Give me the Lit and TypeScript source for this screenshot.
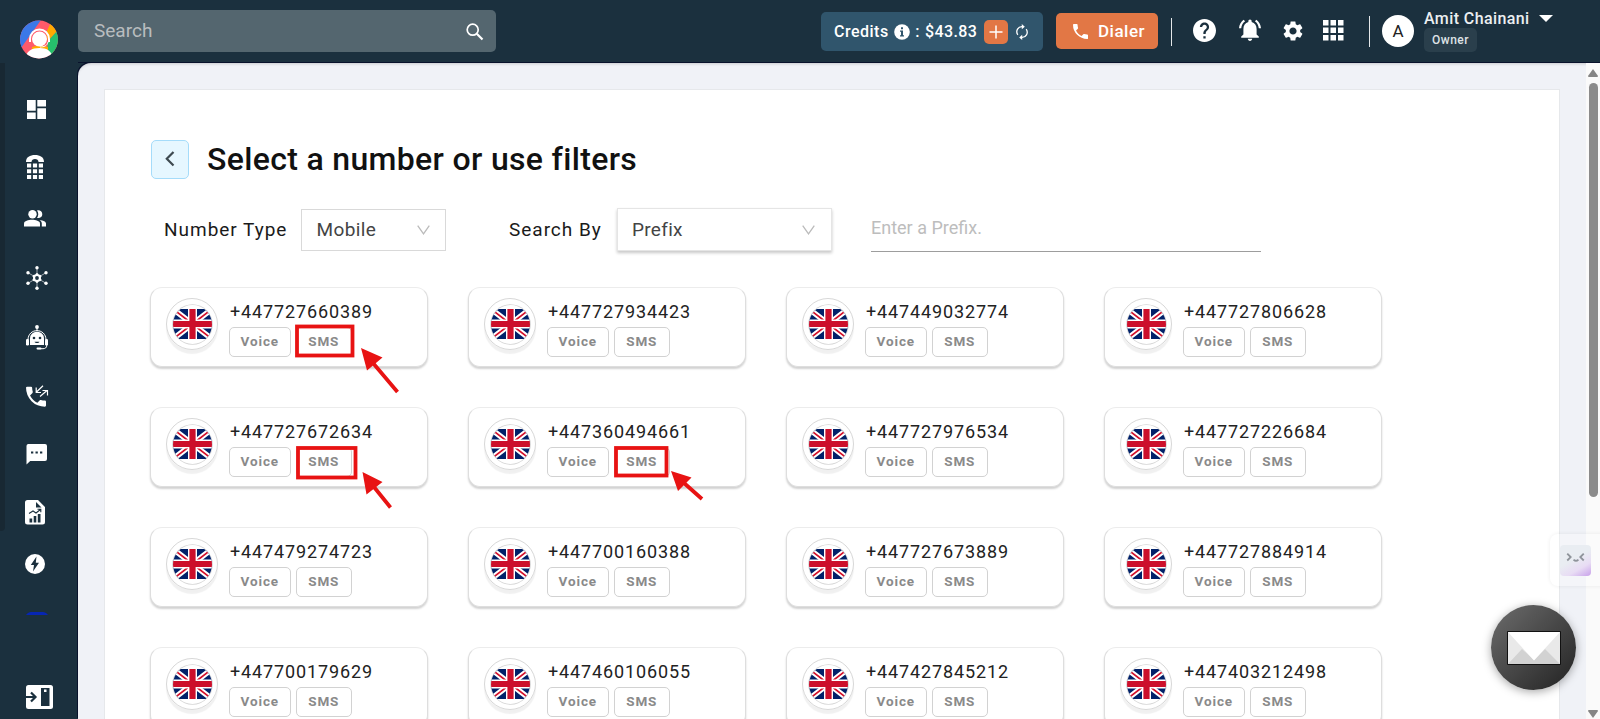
import { LitElement, html, css, svg } from "lit";
import { customElement, property } from "lit/decorators.js";

const flag = svg`
  <rect width="39" height="30" fill="#012169"/>
  <path d="M0 0L39 30M39 0L0 30" stroke="#fff" stroke-width="5.600"/>
  <path d="M0 0L19.5 15M39 30L19.5 15M39 0L19.5 15M0 30L19.5 15" stroke="#d3112b" stroke-width="1.700"/>
  <path d="M19.5 0V30M0 15H39" stroke="#fff" stroke-width="9"/>
  <path d="M19.5 0V30M0 15H39" stroke="#cc0f2b" stroke-width="6.200"/>`;

@customElement("number-card")
class NumberCard extends LitElement {
  @property() number = "";

  static styles = css`
    :host {
      display: flex;
      box-sizing: border-box;
      height: 80px;
      padding: 10px 0 0 15px;
      border: 1px solid #dedede;
      border-top-color: #ececec;
      border-radius: 12px;
      background: #fff;
      box-shadow: 0 2px 2px rgba(0, 0, 0, 0.18);
    }
    .ring {
      display: flex;
      align-items: center;
      justify-content: center;
      box-sizing: border-box;
      width: 52px;
      height: 52px;
      border: 1px solid #d8d8d8;
      border-radius: 50%;
      box-shadow: 0 4px 1px rgba(0, 0, 0, 0.06);
    }
    .flag {
      display: flex;
      align-items: center;
      justify-content: center;
      width: 39px;
      height: 39px;
      border-radius: 50%;
      overflow: hidden;
      box-shadow: 0 0 0 0.8px #d4d4d4;
    }
    .info {
      margin-left: 10.5px;
      padding-top: 3px;
    }
    .num {
      padding-left: 1.500px;
      font-size: 18px;
      line-height: 22px;
      letter-spacing: 0.88px;
      color: #222;
    }
    .tags {
      display: flex;
      gap: 5px;
      margin-top: 4px;
    }
    .tag {
      box-sizing: border-box;
      height: 30px;
      border: 1.5px solid #d2d2d2;
      border-radius: 5px;
      font-size: 13.500px;
      font-weight: 700;
      line-height: 26px;
      letter-spacing: 0.9px;
      text-align: center;
      color: #8a8a8a;
    }
    .voice { width: 62.500px; }
    .sms { width: 55.500px; }
  `;

  render() {
    return html`
      <div class="ring">
        <div class="flag"><svg width="39" height="30" viewBox="0 0 39 30">${flag}</svg></div>
      </div>
      <div class="info">
        <div class="num">${this.number}</div>
        <div class="tags">
          <span class="tag voice">Voice</span>
          <span class="tag sms">SMS</span>
        </div>
      </div>`;
  }
}

@customElement("side-nav")
class SideNav extends LitElement {
  static styles = css`
    :host {
      display: flex;
      flex-direction: column;
      box-sizing: border-box;
      width: 78px;
      height: 719px;
      background: #1b303e;
      color: #fff;
    }
    .logo { margin: 20px 0 0 20px; width: 38px; height: 39px; }
    .body { display: flex; margin-top: 4px; }
    .strip { width: 5px; height: 468px; background: #182833; border-bottom-right-radius: 4px; }
    .items { display: flex; flex-direction: column; }
    svg { display: block; fill: currentColor; }
    .dash { margin: 37px 0 0 22px; }
    .dial { margin: 36px 0 0 21px; }
    .people { margin: 31px 0 0 18px; }
    .hub { margin: 39px 0 0 20px; }
    .bot { margin: 35px 0 0 20px; }
    .call { margin: 34px 0 0 20px; }
    .chat { margin: 37px 0 0 21px; }
    .report { margin: 35px 0 0 20px; }
    .bolt { margin: 29px 0 0 20px; }
    .arc { margin: 38px 0 0 21px; }
    .collapse { margin: 70px 0 0 21px; }
  `;

  render() {
    return html`
      <svg class="logo" viewBox="0 0 38 39">
        <defs><clipPath id="c"><circle cx="19" cy="19.5" r="19"/></clipPath></defs>
        <g clip-path="url(#c)">
          <rect width="38" height="39" fill="#ff5a6a"/>
          <path d="M0 0H21L1 28H0Z" fill="#3b78e7"/>
          <path d="M32 0L26 13L28 21L38 10V0Z" fill="#ffaa00"/>
          <path d="M38 10L28 21L27 30L33 39H38Z" fill="#26bf6c"/>
          <path d="M12 27L20 25L28 27V32H12Z" fill="#ffaa00"/>
          <path d="M5 39C6 31 12 28 19.5 28S32 31 33 39Z" fill="#fff"/>
          <path d="M10 22V19A9.5 9.5 0 0 1 29 19V22" fill="none" stroke="#fff" stroke-width="2"/>
          <path d="M28 22C27 26 24 27 20 27" fill="none" stroke="#fff" stroke-width="1"/>
          <circle cx="19.5" cy="19" r="7.5" fill="#fff"/>
        </g>
      </svg>
      <div class="body">
        <div class="strip"></div>
        <div class="items">
          <svg class="dash" width="19" height="19" viewBox="0 0 19 19"><path d="M0 0H8.700V10.700H0ZM10.300 0H19V6.500H10.300ZM0 12.500H8.700V19H0ZM10.300 8.200H19V19H10.300Z"/></svg>
          <svg class="dial" width="18" height="24" viewBox="0 0 18 24">
            <path d="M0 7C0 2 4 0 9 0S18 2 18 7H12.5C12.5 5 11 4 9 4S5.500 5 5.500 7Z"/>
            <path d="M1 8.500H5.200V12.600H1ZM6.900 8.500H11.100V12.600H6.900ZM12.800 8.500H17V12.600H12.800ZM1 14.200H5.200V18.300H1ZM6.900 14.200H11.100V18.300H6.900ZM12.800 14.200H17V18.300H12.800ZM1 19.900H5.200V24H1ZM6.900 19.900H11.100V24H6.900ZM12.800 19.900H17V24H12.800Z"/>
          </svg>
          <svg class="people" width="24" height="17" viewBox="0 0 24 17">
            <circle cx="9.500" cy="4.200" r="4.200"/>
            <path d="M1 16.500V13.500C1 11 5.500 9.800 9 9.800S17 11 17 13.500V16.500Z"/>
            <path d="M14 7.800C15.700 5.700 15.700 2.700 14 .4C16.500 -.5 19.300 1.200 19.300 4.200S16.500 8.600 14 7.800ZM18.800 16.500V13.500C18.800 12 18 10.800 16.600 9.900C20 10.200 23 11.400 23 13.500V16.500Z"/>
          </svg>
          <svg class="hub" width="24" height="24" viewBox="0 0 24 24">
            <path d="M12 1V23M3 6.700L21 17.300M21 6.700L3 17.300" stroke="currentColor" stroke-width=".6"/>
            <circle cx="12" cy="12" r="4"/>
            <path d="M12 7.300V16.700M7.900 9.700L16.100 14.300M16.100 9.700L7.900 14.300" stroke="currentColor" stroke-width="2.200"/>
            <circle cx="12" cy="12" r="1.900" fill="#1b303e"/>
            <circle cx="12" cy="1.800" r="1.700"/><circle cx="12" cy="22.200" r="1.700"/><circle cx="3" cy="6.800" r="1.700"/><circle cx="21" cy="6.800" r="1.700"/><circle cx="3" cy="17.200" r="1.700"/><circle cx="21" cy="17.200" r="1.700"/>
          </svg>
          <svg class="bot" width="24" height="25" viewBox="0 0 24 25">
            <circle cx="12" cy="2" r="1.900"/><path d="M11.500 3H12.500V6H11.500Z"/>
            <path d="M3 15C3 2.500 21 2.500 21 15" fill="none" stroke="currentColor" stroke-width="1"/>
            <path d="M5 20V13.500C5 4.500 19 4.500 19 13.500V20Z"/>
            <rect x="1" y="14" width="3" height="6.500" rx="1.300"/><rect x="20" y="14" width="3" height="6.500" rx="1.300"/>
            <path d="M21.800 20C21.800 23 20 23.700 18 23.700H12.500" fill="none" stroke="currentColor" stroke-width="1"/>
            <rect x="11.500" y="22.600" width="5" height="2" rx="1"/>
            <circle cx="9" cy="13" r="1.300" fill="#1b303e"/><circle cx="15" cy="13" r="1.300" fill="#1b303e"/>
            <path d="M9.500 16.700H14.500C14 18.500 10 18.500 9.500 16.700Z" fill="#1b303e"/>
          </svg>
          <svg class="call" width="24" height="23" viewBox="0 0 24 23">
            <path transform="translate(-2.300 -.6) scale(1.110)" d="M6.620 10.790C8.060 13.620 10.380 15.940 13.210 17.380L15.410 15.180C15.690 14.900 16.080 14.820 16.430 14.930C17.550 15.300 18.750 15.500 20 15.500A1 1 0 0 1 21 16.500V20A1 1 0 0 1 20 21A17 17 0 0 1 3 4A1 1 0 0 1 4 3H7.500A1 1 0 0 1 8.500 4C8.500 5.250 8.700 6.450 9.070 7.570C9.180 7.920 9.100 8.310 8.820 8.590Z"/>
            <path d="M18 1.800L11.500 8M11.200 3.500V8.500H16M15 12.500L22 6.500M17.500 6.500H22.500V11.500" fill="none" stroke="currentColor" stroke-width="1.200"/>
          </svg>
          <svg class="chat" width="21" height="21" viewBox="0 0 21 21">
            <path d="M2 0H19A2 2 0 0 1 21 2V15A2 2 0 0 1 19 17H4.200L.5 20.500V2A2 2 0 0 1 2 0Z"/>
            <path d="M5 7.500H7.300V9.500H5ZM9.500 7.500H11.800V9.500H9.500ZM14 7.500H16.300V9.500H14Z" fill="#1b303e"/>
          </svg>
          <svg class="report" width="20" height="25" viewBox="0 0 20 25">
            <path d="M2.500 0H13L20 7V22A2.500 2.500 0 0 1 17.500 24.500H2.500A2.500 2.500 0 0 1 0 22V2.500A2.500 2.500 0 0 1 2.500 0Z"/>
            <path d="M11 2L16.500 7.500H11Z" fill="#1b303e"/>
            <path d="M4 13.500L8 11L11 13L15.500 9.500M12.500 9.300H15.800V12.300" fill="none" stroke="#1b303e" stroke-width="1.100"/>
            <path d="M4.500 18.500H7.200V22.500H4.500ZM8.700 16H11.300V22.500H8.700ZM12.800 14H15.500V22.500H12.800Z" fill="#1b303e"/>
          </svg>
          <svg class="bolt" width="20" height="20" viewBox="0 0 20 20"><circle cx="10" cy="10" r="10"/><path d="M11.500 2.500L5.800 11H9L8 17.500L14 8.700H10.800Z" fill="#1b303e"/></svg>
          <svg class="arc" width="22" height="3" viewBox="0 0 22 3"><path d="M0 3C2 .7 3 0 5 0H17C19 0 20 .7 22 3Z" fill="#0726b3"/></svg>
          <svg class="collapse" width="27" height="24" viewBox="0 0 27 24">
            <rect width="27" height="24" rx="2.500"/>
            <path d="M15 3H23.500V21H15Z" fill="#1b303e"/><rect x="18" y="4.500" width="2.500" height="2.500"/>
            <path d="M0 12H9M5 7.500L9.500 12L5 16.500" fill="none" stroke="#1b303e" stroke-width="2.200"/>
          </svg>
        </div>
      </div>`;
  }
}

@customElement("top-bar")
class TopBar extends LitElement {
  static styles = css`
    :host {
      display: flex;
      box-sizing: border-box;
      height: 63px;
      background: #1b303e;
      border-bottom: 1px solid #09122c;
      color: #fff;
    }
    svg { display: block; flex: none; fill: currentColor; }
    .search {
      display: flex;
      box-sizing: border-box;
      justify-content: space-between;
      width: 418px;
      height: 42px;
      margin: 10px 325px 0 0;
      padding: 0 12px 0 16px;
      border-radius: 5px;
      background: #54666f;
      color: #b9bdbf;
      font-size: 19px;
      line-height: 41px;
      letter-spacing: 0;
    }
    .search svg { margin-top: 13px; color: #fff; }
    .credits {
      display: flex;
      align-items: center;
      box-sizing: border-box;
      width: 222px;
      height: 39px;
      margin-top: 12px;
      padding: 0 13px;
      border-radius: 5px;
      background: #30556c;
      font-size: 16px;
      font-weight: 500;
      letter-spacing: 0.5px;
      white-space: nowrap;
    }
    .info { margin: 0 5.500px 0 5px; }
    .amount { margin-left: 5px; letter-spacing: 0.4px; }
    .plus { margin: 0 8px 0 7px; width: 24px; height: 24px; border-radius: 5px; background: #e27745; }
    .dialer {
      display: flex;
      align-items: center;
      box-sizing: border-box;
      width: 102px;
      height: 36px;
      margin: 13px 0 0 13px;
      padding-left: 17px;
      gap: 10px;
      border-radius: 5px;
      background: #e27745;
      font-size: 17px;
      font-weight: 500;
      letter-spacing: 0.5px;
    }
    .rule { width: 1px; height: 28px; margin: 18px 0 0 13px; background: #e4e7e9; }
    .rule.tall { height: 31px; margin: 16px 0 0 25px; }
    .help { margin: 19px 0 0 21px; }
    .bell { margin: 19px 0 0 23px; }
    .gear { margin: 19px 0 0 20px; }
    .grid { margin: 20px 0 0 18px; }
    .avatar {
      width: 32px;
      height: 32px;
      margin: 15px 0 0 12px;
      border-radius: 50%;
      background: #fff;
      color: #222;
      font-size: 17px;
      line-height: 33px;
      text-align: center;
    }
    .who { margin: 8px 0 0 10px; font-size: 16px; line-height: 21px; font-weight: 500; letter-spacing: 0.4px; white-space: nowrap; color: #eceff1; }
    .role {
      box-sizing: border-box;
      width: 53px;
      height: 24px;
      margin-top: -1px;
      border-radius: 5px;
      background: #2a3f4c;
      color: #dfe3e6;
      font-size: 12px;
      line-height: 24px;
      letter-spacing: 0.5px;
      text-align: center;
    }
    .caret { margin: 15px 0 0 9px; }
  `;

  render() {
    return html`
      <div class="search">Search
        <svg width="18" height="18" viewBox="0 0 18 18"><circle cx="6.700" cy="6.700" r="5.500" fill="none" stroke="currentColor" stroke-width="1.700"/><path d="M10.800 10.800L16.500 16.500" stroke="currentColor" stroke-width="2.200"/></svg>
      </div>
      <div class="credits">
        <span>Credits</span>
        <svg class="info" width="16" height="16" viewBox="0 0 16 16"><circle cx="8" cy="8" r="7.800"/><path d="M7 3.300H9V5.200H7ZM6 6.500H9V11.200H10V12.400H6V11.200H7V7.700H6Z" fill="#30556c"/></svg>
        <span>:</span><span class="amount">$43.83</span>
        <svg class="plus" viewBox="0 0 24 24"><path d="M12 5.500V18.500M5.500 12H18.500" stroke="currentColor" stroke-width="1.500"/></svg>
        <svg width="12" height="16" viewBox="0 0 12 16"><path d="M6.500 2.600A5.200 5.200 0 0 0 1.800 10.800M5.500 13.400A5.200 5.200 0 0 0 10.200 5.200" fill="none" stroke="currentColor" stroke-width="1.300"/><path d="M5.800 0L8.800 2.700L5.800 5.300ZM6.200 10.700L3.200 13.400L6.200 16Z"/></svg>
      </div>
      <div class="dialer">
        <svg width="15" height="15" viewBox="3 3 18 18"><path d="M6.620 10.790C8.060 13.620 10.380 15.940 13.210 17.380L15.410 15.180C15.690 14.900 16.080 14.820 16.430 14.930C17.550 15.300 18.750 15.500 20 15.500A1 1 0 0 1 21 16.500V20A1 1 0 0 1 20 21A17 17 0 0 1 3 4A1 1 0 0 1 4 3H7.500A1 1 0 0 1 8.500 4C8.500 5.250 8.700 6.450 9.070 7.570C9.180 7.920 9.100 8.310 8.820 8.590Z"/></svg>
        <span>Dialer</span>
      </div>
      <div class="rule"></div>
      <svg class="help" width="23" height="23" viewBox="2 2 20 20"><path d="M12 2C6.480 2 2 6.480 2 12s4.480 10 10 10 10-4.480 10-10S17.520 2 12 2zm1 17h-2v-2h2v2zm2.070-7.750l-.9.920C13.450 12.900 13 13.500 13 15h-2v-.5c0-1.100.45-2.100 1.170-2.830l1.240-1.260c.37-.36.59-.86.59-1.410 0-1.100-.9-2-2-2s-2 .9-2 2H8c0-2.210 1.790-4 4-4s4 1.790 4 4c0 .88-.36 1.680-.93 2.250z"/></svg>
      <svg class="bell" width="22" height="22" viewBox="2 2 20 20"><path d="M7.580 4.080L6.150 2.650C3.750 4.480 2.170 7.300 2.030 10.500h2c.15-2.650 1.510-4.970 3.550-6.420zm12.390 6.420h2c-.15-3.200-1.730-6.020-4.120-7.850l-1.420 1.430c2.020 1.450 3.390 3.770 3.540 6.420zM18 11c0-3.070-1.640-5.640-4.500-6.320V4c0-.83-.67-1.500-1.500-1.500s-1.500.67-1.500 1.500v.68C7.630 5.360 6 7.920 6 11v5l-2 2v1h16v-1l-2-2v-5zm-6 11c1.100 0 2-.9 2-2h-4c0 1.100.9 2 2 2z"/></svg>
      <svg class="gear" width="24" height="24" viewBox="0 0 24 24"><path d="M19.140 12.940c.04-.3.060-.61.060-.94 0-.32-.02-.64-.07-.94l2.030-1.580c.18-.14.23-.41.12-.61l-1.920-3.320c-.12-.22-.37-.29-.59-.22l-2.390.96c-.5-.38-1.030-.7-1.620-.94l-.36-2.540c-.04-.24-.24-.41-.48-.41h-3.840c-.24 0-.43.17-.47.41l-.36 2.540c-.59.24-1.130.57-1.620.94l-2.390-.96c-.22-.08-.47 0-.59.22L2.740 8.870c-.12.21-.08.470.12.610l2.030 1.580c-.05.3-.09.630-.09.940s.02.640.07.940l-2.030 1.580c-.18.140-.23.410-.12.610l1.920 3.320c.12.220.37.290.59.220l2.390-.96c.5.380 1.030.7 1.620.940l.36 2.540c.05.240.24.410.48.410h3.840c.24 0 .44-.17.47-.41l.36-2.540c.59-.24 1.130-.56 1.620-.94l2.390.96c.22.080.47 0 .59-.22l1.920-3.320c.12-.22.070-.47-.12-.61l-2.010-1.580zM12 15.600c-1.980 0-3.600-1.620-3.600-3.600s1.620-3.600 3.600-3.600 3.600 1.620 3.600 3.600-1.620 3.600-3.600 3.600z"/></svg>
      <svg class="grid" width="21" height="21" viewBox="0 0 21 21"><path d="M0 0H5.500V5.500H0ZM7.500 0H13V5.500H7.500ZM15 0H20.500V5.500H15ZM0 7.500H5.500V13H0ZM7.500 7.500H13V13H7.500ZM15 7.500H20.500V13H15ZM0 15H5.500V20.500H0ZM7.500 15H13V20.500H7.500ZM15 15H20.500V20.500H15Z"/></svg>
      <div class="rule tall"></div>
      <div class="avatar">A</div>
      <div class="who">Amit Chainani<div class="role">Owner</div></div>
      <svg class="caret" width="14" height="7" viewBox="0 0 14 7"><path d="M0 0H14L7 7Z"/></svg>`;
  }
}

@customElement("app-root")
class AppRoot extends LitElement {
  numbers = [
    "+447727660389", "+447727934423", "+447449032774", "+447727806628",
    "+447727672634", "+447360494661", "+447727976534", "+447727226684",
    "+447479274723", "+447700160388", "+447727673889", "+447727884914",
    "+447700179629", "+447460106055", "+447427845212", "+447403212498",
  ];

  static styles = css`
    :host {
      display: flex;
      position: relative;
      width: 1600px;
      height: 719px;
      overflow: hidden;
      background: #1b303e;
      font-family: Roboto, "Liberation Sans", sans-serif;
    }
    .main { width: 1522px; height: 719px; }
    .content {
      display: flex;
      box-sizing: border-box;
      justify-content: space-between;
      height: 656px;
      overflow: hidden;
      border-top-left-radius: 13px;
      background: #f0f2f7;
      box-shadow: -1px -1px 0 #09122c, inset 0 3px 3px -2px rgba(0, 0, 0, 0.17);
    }
    .panel {
      box-sizing: border-box;
      width: 1456px;
      height: 720px;
      margin: 26px 0 0 26px;
      padding: 50px 45px 0;
      border: 1px solid #e6e8eb;
      background: #fff;
    }
    .scroll {
      display: flex;
      flex-direction: column;
      align-items: center;
      box-sizing: border-box;
      width: 14px;
      height: 656px;
      padding-top: 6px;
      background: #fafafa;
    }
    .thumb { width: 9px; height: 414px; margin: 6px 0 213px 1px; border-radius: 5px; background: #8b8b8b; }
    .title { display: flex; }
    .back {
      display: flex;
      align-items: center;
      justify-content: center;
      box-sizing: border-box;
      width: 38px;
      height: 39px;
      margin-left: 1px;
      border: 1px solid #a5dcfa;
      border-radius: 5px;
      background: #e6f7ff;
    }
    .back svg { margin-bottom: 2px; }
    .heading { margin: 0 0 0 18px; font-size: 32px; font-weight: 500; line-height: 38px; letter-spacing: 0.33px; color: #111; }
    .filters { display: flex; height: 44px; margin: 29px 0 0 14px; line-height: 43px; font-size: 19px; letter-spacing: 0.98px; color: #1a1a1a; white-space: nowrap; }
    .label { width: 137px; }
    .label.by { width: 108px; margin-left: 63px; }
    .select {
      display: flex;
      align-items: center;
      justify-content: space-between;
      box-sizing: border-box;
      border: 1px solid #d9d9d9;
      padding: 0 15px 0 14.500px;
      color: #444;
    }
    .type { width: 145px; height: 42px; margin-top: 1px; line-height: 32px; letter-spacing: 0.4px; }
    .by-select { width: 215px; height: 43px; padding: 0 16px 0 14px; border-color: #e5e5e5; box-shadow: 0 2px 3px rgba(0, 0, 0, 0.22); letter-spacing: 0.3px; }
    .prefix { width: 390px; height: 43px; margin-left: 39px; border-bottom: 1px solid #9d9d9d; line-height: 40px; font-size: 18px; letter-spacing: 0; color: #bdbdbd; }
    .cards { display: grid; grid-template-columns: repeat(4, 278px); gap: 40px; margin-top: 35px; }
    .over { position: absolute; left: 0; top: 0; pointer-events: none; }
    .widget {
      position: absolute;
      left: 1550px;
      top: 534px;
      box-sizing: border-box;
      width: 60px;
      height: 52px;
      padding: 11px 0 0 10px;
      border-radius: 8px;
      background: rgba(255, 255, 255, 0.25);
      box-shadow: 0 0 4px rgba(0, 0, 0, 0.07);
    }
    .face { display: block; width: 31px; height: 31px; border-radius: 4px; background: linear-gradient(150deg, #e9edf2 45%, #e8dcf4 72%, #c8a0ea); }
    .mail {
      position: absolute;
      left: 1491px;
      top: 605px;
      display: flex;
      align-items: center;
      justify-content: center;
      width: 85px;
      height: 85px;
      border-radius: 50%;
      background: linear-gradient(135deg, #6d6d6d, #222);
      box-shadow: 0 2px 10px rgba(0, 0, 0, 0.35);
    }
  `;

  render() {
    const chevron = html`<svg width="13" height="10" viewBox="0 0 13 10"><path d="M.7 .7L6.500 8.800L12.300 .7" fill="none" stroke="#bbb" stroke-width="1.300"/></svg>`;
    return html`
      <side-nav></side-nav>
      <div class="main">
        <top-bar></top-bar>
        <div class="content">
          <div class="panel">
            <div class="title">
              <div class="back"><svg width="10" height="16" viewBox="0 0 10 16"><path d="M8.500 1L1.800 7.800L8.500 14.500" fill="none" stroke="#3e4a50" stroke-width="2.200"/></svg></div>
              <h1 class="heading">Select a number or use filters</h1>
            </div>
            <div class="filters">
              <span class="label">Number Type</span>
              <div class="select type">Mobile${chevron}</div>
              <span class="label by">Search By</span>
              <div class="select by-select">Prefix${chevron}</div>
              <div class="prefix">Enter a Prefix.</div>
            </div>
            <div class="cards">${this.numbers.map((n) => html`<number-card .number=${n}></number-card>`)}</div>
          </div>
          <div class="scroll">
            <svg width="10" height="8" viewBox="0 0 10 8"><path d="M5 0L10 7Q10 8 9 8H1Q0 8 0 7Z" fill="#858585"/></svg>
            <div class="thumb"></div>
            <svg width="10" height="8" viewBox="0 0 10 8"><path d="M5 8L10 1Q10 0 9 0H1Q0 0 0 1Z" fill="#858585"/></svg>
          </div>
        </div>
      </div>
      <svg class="over" width="1600" height="719" viewBox="0 0 1600 719">
        <g fill="none" stroke="#e81313" stroke-width="3.800">
          <rect x="297" y="326.500" width="55.500" height="29"/>
          <rect x="298" y="448" width="57.500" height="29.500"/>
          <rect x="616" y="448" width="50.500" height="27.500"/>
          <path d="M373 363L397.500 392M374 487L390.500 507.500M684 483L702 499"/>
        </g>
        <path d="M361 348L382.500 357.500L367 370.500ZM362.500 472L382.500 482L366.500 494.500ZM671 471L691.500 477.500L678 491Z" fill="#e81313"/>
      </svg>
      <div class="widget">
        <svg class="face" viewBox="0 0 32 31"><path d="M7.500 8.500L11 12L7.500 15.500M24.500 8.500L21 12L24.500 15.500M14 14.500Q16.500 17 19 14.500" fill="none" stroke="#8f949b" stroke-width="1.900"/></svg>
      </div>
      <div class="mail">
        <svg width="54" height="34" viewBox="0 0 54 34"><rect width="54" height="34" rx="1" fill="#111"/><rect x="1" y="1" width="52" height="32" fill="#e9e9e9"/><path d="M1 33L15 18L27 29L38 18L53 33Z" fill="#d2d2d2"/><path d="M1 1H53L27 29.500Z" fill="#fff"/></svg>
      </div>`;
  }
}
